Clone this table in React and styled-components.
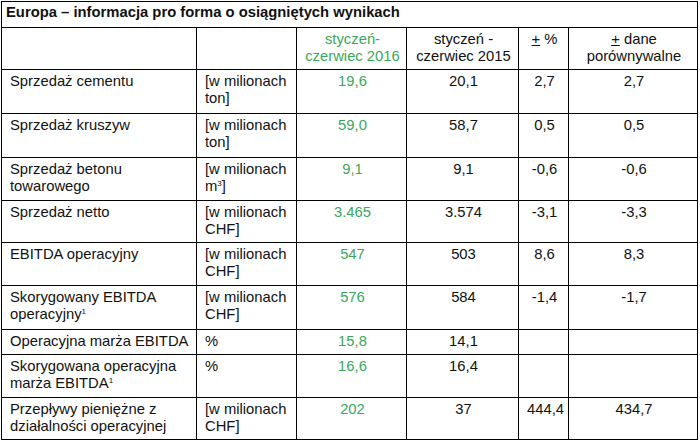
import React from 'react';
import styled, { createGlobalStyle } from 'styled-components';

const GlobalStyle = createGlobalStyle`
  body {
    margin: 0;
    background: #fff;
    font-family: 'Liberation Sans', Arial, sans-serif;
  }
`;

const Page = styled.div`
  padding: 1px 0 0 1px;
`;

const Table = styled.table`
  border-collapse: collapse;
  table-layout: fixed;
  width: 696px;
  font-size: 14.8px;
  line-height: 17px;
  color: #111;
`;

const TitleCell = styled.td`
  border: 1px solid #000;
  height: 23px;
  padding: 2px 4px 0;
  font-weight: bold;
  font-size: 14.8px;
  vertical-align: top;
`;

const Row = styled.tr`
  height: ${p => p.$h}px;
`;

const Cell = styled.td`
  border: 1px solid #000;
  padding: 3px 6px 0 8px;
  vertical-align: top;
  text-align: ${p => (p.$center ? 'center' : 'left')};
  color: ${p => (p.$green ? '#3aa85a' : '#111')};
`;

const Sup = styled.sup`
  font-size: 8px;
  line-height: 0;
  vertical-align: 5px;
`;

const rows = [
  { name: 'Sprzedaż cementu', unit: '[w milionach ton]', a: '19,6', b: '20,1', c: '2,7', d: '2,7', h: 44 },
  { name: 'Sprzedaż kruszyw', unit: '[w milionach ton]', a: '59,0', b: '58,7', c: '0,5', d: '0,5', h: 44 },
  { name: 'Sprzedaż betonu towarowego', unit: <>[w milionach m<Sup>3</Sup>]</>, a: '9,1', b: '9,1', c: '-0,6', d: '-0,6', h: 43 },
  { name: 'Sprzedaż netto', unit: '[w milionach CHF]', a: '3.465', b: '3.574', c: '-3,1', d: '-3,3', h: 42 },
  { name: 'EBITDA operacyjny', unit: '[w milionach CHF]', a: '547', b: '503', c: '8,6', d: '8,3', h: 43 },
  { name: <>Skorygowany EBITDA operacyjny<Sup>1</Sup></>, unit: '[w milionach CHF]', a: '576', b: '584', c: '-1,4', d: '-1,7', h: 44 },
  { name: 'Operacyjna marża EBITDA', unit: '%', a: '15,8', b: '14,1', c: '', d: '', h: 25 },
  { name: <>Skorygowana operacyjna marża EBITDA<Sup>1</Sup></>, unit: '%', a: '16,6', b: '16,4', c: '', d: '', h: 43 },
  { name: 'Przepływy pieniężne z działalności operacyjnej', unit: '[w milionach CHF]', a: '202', b: '37', c: '444,4', d: '434,7', h: 42 },
];

export default function App() {
  return (
    <Page>
      <GlobalStyle />
      <Table>
        <colgroup>
          <col style={{ width: 195 }} />
          <col style={{ width: 100 }} />
          <col style={{ width: 110 }} />
          <col style={{ width: 112 }} />
          <col style={{ width: 50 }} />
          <col style={{ width: 129 }} />
        </colgroup>
        <tbody>
          <tr>
            <TitleCell colSpan={6}>Europa – informacja pro forma o osiągniętych wynikach</TitleCell>
          </tr>
          <Row $h={42}>
            <Cell />
            <Cell />
            <Cell $center $green>styczeń-<br />czerwiec 2016</Cell>
            <Cell $center>styczeń -<br />czerwiec 2015</Cell>
            <Cell $center><u>+</u> %</Cell>
            <Cell $center><u>+</u> dane<br />porównywalne</Cell>
          </Row>
          {rows.map((r, i) => (
            <Row key={i} $h={r.h}>
              <Cell>{r.name}</Cell>
              <Cell>{r.unit}</Cell>
              <Cell $center $green>{r.a}</Cell>
              <Cell $center>{r.b}</Cell>
              <Cell $center>{r.c}</Cell>
              <Cell $center>{r.d}</Cell>
            </Row>
          ))}
        </tbody>
      </Table>
    </Page>
  );
}
